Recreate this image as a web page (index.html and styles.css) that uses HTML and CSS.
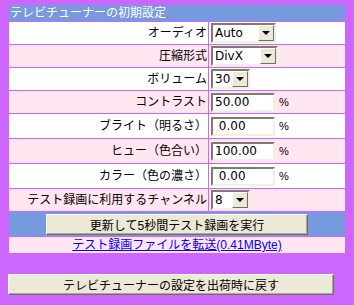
FILE: index.html
```html
<!DOCTYPE html>
<html lang="ja">
  <head>
    <meta charset="UTF-8" />
    <title>テレビチューナーの初期設定</title>
    <link rel="stylesheet" href="styles.css">
  </head>
  <body>
    <form class="tuner-form">
      <table class="settings">
        <colgroup>
          <col class="col-label">
          <col class="col-value">
        </colgroup>
        <tr class="head">
          <td colspan="2">テレビチューナーの初期設定</td>
        </tr>
        <tr class="row-white row-sel">
          <td class="label">オーディオ</td>
          <td><span class="sel"><select class="w-audio"><option>Auto</option><option>Mono</option><option>Stereo</option></select></span></td>
        </tr>
        <tr class="row-pink row-sel">
          <td class="label">圧縮形式</td>
          <td><span class="sel"><select class="w-codec"><option>DivX</option><option>MPEG</option></select></span></td>
        </tr>
        <tr class="row-white row-sel">
          <td class="label">ボリューム</td>
          <td><span class="sel"><select class="w-small"><option>30</option><option>20</option><option>10</option></select></span></td>
        </tr>
        <tr class="row-pink row-sel">
          <td class="label">コントラスト</td>
          <td><input class="num" type="text" value="50.00"><span class="pct">%</span></td>
        </tr>
        <tr class="row-white row-inp">
          <td class="label">ブライト（明るさ）</td>
          <td><input class="num" type="text" value=" 0.00"><span class="pct">%</span></td>
        </tr>
        <tr class="row-pink row-inp">
          <td class="label">ヒュー（色合い）</td>
          <td><input class="num" type="text" value="100.00"><span class="pct">%</span></td>
        </tr>
        <tr class="row-white row-inp">
          <td class="label">カラー（色の濃さ）</td>
          <td><input class="num" type="text" value=" 0.00"><span class="pct">%</span></td>
        </tr>
        <tr class="row-pink row-sel">
          <td class="label">テスト録画に利用するチャンネル</td>
          <td><span class="sel"><select class="w-small"><option>8</option><option>1</option><option>4</option></select></span></td>
        </tr>
        <tr class="row-action">
          <td colspan="2"><button type="button" class="btn btn-test">更新して5秒間テスト録画を実行</button></td>
        </tr>
        <tr class="row-pink row-link">
          <td colspan="2"><a href="#">テスト録画ファイルを転送(0.41MByte)</a></td>
        </tr>
      </table>

      <button type="button" class="btn btn-reset">テレビチューナーの設定を出荷時に戻す</button>
    </form>
  </body>
</html>
```

FILE: styles.css
```css
body {
  margin: 4px 8px;
  background-color: #cc66ff;
  font-family: "Liberation Sans", "Noto Sans CJK JP", sans-serif;
  font-size: 12px;
  color: #000;
}

.settings {
  width: 338px;
  table-layout: fixed;
  border-spacing: 1px;
  background-color: #cc66ff;
}

.col-label {
  width: 199px;
}

.col-value {
  width: 136px;
}

.settings td {
  padding: 0 2px;
  white-space: nowrap;
  line-height: 14px;
}

.head td {
  height: 16px;
  background-color: #7799dd;
  color: #fff;
  padding: 0 1px;
}

.row-white td {
  background-color: #fff;
}

.row-pink td {
  background-color: #ffe6f0;
}

.row-sel td {
  height: 22px;
}

.row-inp td {
  height: 24px;
}

.settings td.label {
  text-align: right;
  padding-right: 1px;
  overflow: visible;
}

/* select boxes drawn like the old windows ones */
.sel {
  position: relative;
  display: inline-block;
  vertical-align: middle;
}

.sel select {
  appearance: none;
  -webkit-appearance: none;
  height: 20px;
  margin: 0;
  padding: 0 16px 0 2px;
  border: 2px solid;
  border-color: #7e7c6e #f1efe2 #f1efe2 #7e7c6e;
  background-color: #fff;
  font-family: "DejaVu Sans", "Noto Sans CJK JP", sans-serif;
  font-size: 12px;
  color: #000;
  border-radius: 0;
}

.w-audio {
  width: 65px;
}

.w-codec {
  width: 67px;
}

.w-small {
  width: 39px;
}

.sel::before {
  content: "";
  position: absolute;
  right: 2px;
  top: 2px;
  width: 14px;
  height: 14px;
  background-color: #ece9d8;
  border: 1px solid;
  border-color: #fff #716f64 #716f64 #fff;
  pointer-events: none;
}

.sel::after {
  content: "";
  position: absolute;
  right: 6px;
  top: 8px;
  border-left: 4px solid transparent;
  border-right: 4px solid transparent;
  border-top: 4px solid #000;
  pointer-events: none;
}

.num {
  width: 64px;
  height: 19px;
  box-sizing: border-box;
  margin: 0;
  padding: 0 2px;
  border: 2px solid;
  border-color: #7e7c6e #f1efe2 #f1efe2 #7e7c6e;
  font-family: "DejaVu Sans", sans-serif;
  font-size: 12px;
  vertical-align: middle;
}

.pct {
  margin-left: 4px;
  font-size: 11px;
  vertical-align: middle;
}

.row-action td {
  height: 24px;
  background-color: #7799dd;
  text-align: center;
}

.row-link td {
  height: 16px;
  text-align: center;
}

.row-link a {
  color: #0000ff;
  text-decoration: underline;
}

.btn {
  height: 21px;
  margin: 0;
  padding: 0;
  background-color: #ece9d8;
  border: 1px solid;
  border-color: #fff #716f64 #716f64 #fff;
  box-shadow: inset -1px -1px #aca899;
  font-family: "Liberation Sans", "Noto Sans CJK JP", sans-serif;
  font-size: 12px;
  color: #000;
  cursor: pointer;
}

.btn-test {
  width: 262px;
  vertical-align: middle;
}

.btn-reset {
  display: block;
  width: 326px;
  margin-top: 20px;
}
```
